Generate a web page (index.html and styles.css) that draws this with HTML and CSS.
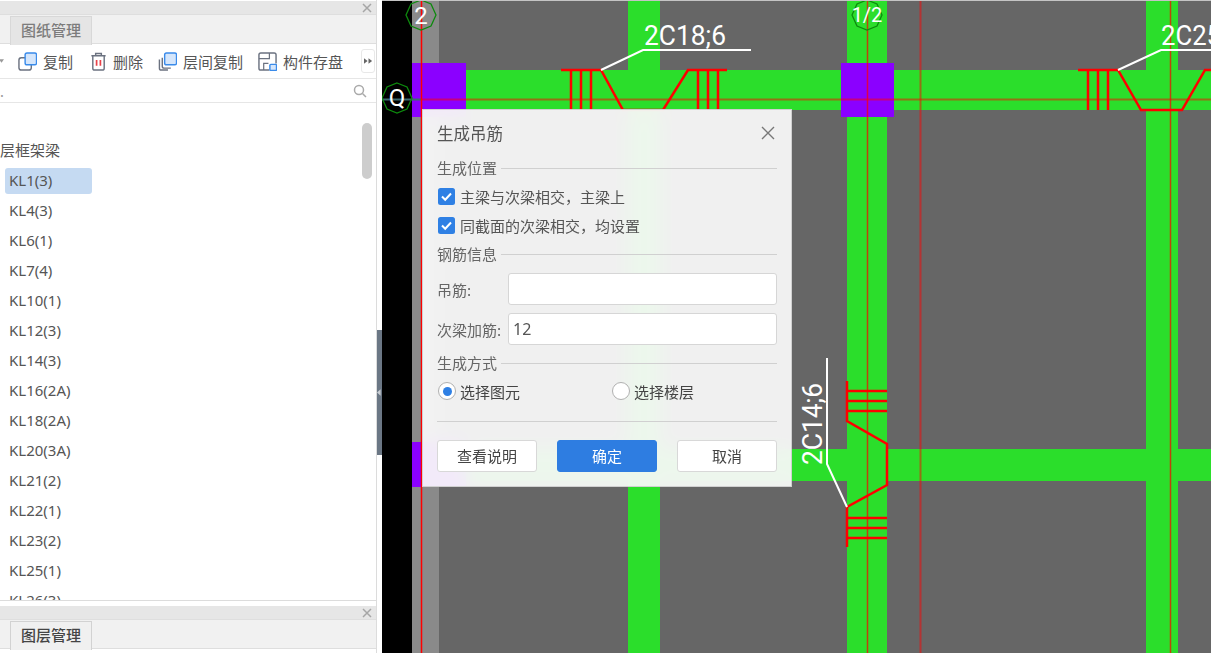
FILE: index.html
```html
<!DOCTYPE html>
<html lang="zh">
<head>
<meta charset="utf-8">
<title>生成吊筋</title>
<link rel="stylesheet" href="styles.css">
</head>
<body>
<div class="app">
  <aside class="side">
    <section class="panel panel-top">
      <div class="titlebar"><svg class="x" viewBox="0 0 10 10"><path d="M1 1l8 8M9 1l-8 8"/></svg></div>
      <div class="tabs"><div class="tab tab-muted">图纸管理</div></div>
      <div class="toolbar">
        <svg class="caret" viewBox="0 0 6 4"><path d="M0 0h6L3 4z"/></svg>
        <div class="tool tool-copy">
          <svg class="ico" viewBox="0 0 20 20"><rect x="1" y="6" width="13" height="13" rx="2.5" class="s-gray"/><rect x="7.5" y="1" width="12" height="12.5" rx="2" class="s-blue"/></svg>
          <span>复制</span>
        </div>
        <div class="tool tool-del">
          <svg class="ico ico-del" viewBox="0 0 17 20"><path d="M1 4h15M5.5 4V1.500h6V4M2.500 4v13a2 2 0 0 0 2 2h8a2 2 0 0 0 2-2V4" class="s-gray"/><path d="M6.500 8.500v6M10.500 8.500v6" class="s-red"/></svg>
          <span>删除</span>
        </div>
        <div class="tool tool-floor">
          <svg class="ico" viewBox="0 0 20 20"><path d="M1.500 8v9a2 2 0 0 0 2 2h7M4.500 6v9a2 2 0 0 0 2 2h7" class="s-gray"/><rect x="7" y="1" width="12.500" height="12.500" rx="2" class="s-blue"/></svg>
          <span>层间复制</span>
        </div>
        <div class="tool tool-save">
          <svg class="ico" viewBox="0 0 20 20"><path d="M12 19H3a2 2 0 0 1-2-2V3a2 2 0 0 1 2-2h14a2 2 0 0 1 2 2v9" class="s-gray"/><path d="M1 7h11V1M6 19v-7h5" class="s-line"/><rect x="12.500" y="13" width="7" height="6.500" rx="1" class="s-blue"/></svg>
          <span>构件存盘</span>
        </div>
        <div class="more"><svg viewBox="0 0 10 6"><path d="M0 0l4 3-4 3zM5 0l4 3-4 3z"/></svg></div>
      </div>
      <div class="search">
        <span class="placeholder">.</span>
        <svg class="search-ico" viewBox="0 0 14 14"><circle cx="6" cy="6" r="4.500"/><path d="M9.500 9.500L13 13"/></svg>
      </div>
      <div class="list">
        <div class="group">层框架梁</div>
        <div class="item item-on">KL1(3)</div>
        <div class="item">KL4(3)</div>
        <div class="item">KL6(1)</div>
        <div class="item">KL7(4)</div>
        <div class="item">KL10(1)</div>
        <div class="item">KL12(3)</div>
        <div class="item">KL14(3)</div>
        <div class="item">KL16(2A)</div>
        <div class="item">KL18(2A)</div>
        <div class="item">KL20(3A)</div>
        <div class="item">KL21(2)</div>
        <div class="item">KL22(1)</div>
        <div class="item">KL23(2)</div>
        <div class="item">KL25(1)</div>
        <div class="item">KL26(3)</div>
        <div class="thumb"></div>
      </div>
    </section>
    <section class="panel panel-bottom">
      <div class="titlebar"><svg class="x" viewBox="0 0 10 10"><path d="M1 1l8 8M9 1l-8 8"/></svg></div>
      <div class="tabs"><div class="tab">图层管理</div></div>
    </section>
  </aside>
  <div class="splitter"><div class="handle"><svg viewBox="0 0 5 8"><path d="M4.500 0v8L0 4z"/></svg></div></div>
  <main class="stage">
    <svg class="cad" viewBox="382 0 829 653" aria-label="CAD">
      <rect x="382" y="0" width="829" height="653" fill="#000"/>
      <rect x="412" y="0" width="27" height="653" fill="#8a8a8a"/>
      <rect x="439" y="0" width="772" height="653" fill="#666"/>
      <g fill="#2bde2b">
        <rect x="628" y="0" width="32" height="653"/>
        <rect x="847" y="0" width="40" height="653"/>
        <rect x="1146" y="0" width="32" height="653"/>
        <rect x="466" y="70" width="745" height="40"/>
        <rect x="412" y="449" width="799" height="32"/>
      </g>
      <g fill="#8b00ff">
        <rect x="412" y="63" width="54" height="54"/>
        <rect x="841" y="63" width="53" height="54"/>
        <rect x="412" y="442" width="54" height="45"/>
      </g>
      <path d="M382 99.500H421" stroke="#3d6a70" stroke-width="2" fill="none"/>
      <g stroke="#f00" fill="none">
        <path d="M421 99.500H1211" stroke-width="2" opacity=".5"/>
        <path d="M421.500 0V653" stroke-width="1.500"/>
        <path d="M867.500 0V653" stroke-width="1.500" opacity=".7"/>
        <path d="M920.500 0V653" stroke-width="2" opacity=".5"/>
        <path d="M1170.500 0V653" stroke-width="1.500" opacity=".7"/>
      </g>
      <g stroke="#f00" fill="none" stroke-width="2.500">
        <path d="M561 70H601L623 110H663L688 70H727"/>
        <path d="M571 70V110M581 70V110M591 70V110M698 70V110M708 70V110M718 70V110"/>
        <path d="M1078 70H1118L1141 110H1182L1205 70H1211"/>
        <path d="M1088 70V110M1098 70V110M1108 70V110"/>
        <path d="M847 381V421L887 444V485L847 507V547"/>
        <path d="M847 391H887M847 401H887M847 411H887M847 518H887M847 528H887M847 538H887"/>
      </g>
      <g stroke="#fff" fill="none" stroke-width="2">
        <path d="M601 70L643 50H751"/>
        <path d="M1118 70L1161 50H1211"/>
        <path d="M827 358V464L847 507"/>
      </g>
      <g class="cad-label">
        <text x="644" y="45" textLength="82" lengthAdjust="spacingAndGlyphs">2C18;6</text>
        <text x="1161" y="45" textLength="60" lengthAdjust="spacingAndGlyphs">2C25</text>
        <text transform="translate(822 465) rotate(-90)" textLength="82" lengthAdjust="spacingAndGlyphs">2C14;6</text>
      </g>
      <g fill="none" stroke="#0d8a0d" stroke-width="1.300">
        <polygon points="421,0 431,4 436,15 431,26 421,30 411,26 406,15 411,4"/>
        <polygon points="397,83 407,87 412,98 407,109 397,113 387,109 382,98 387,87"/>
        <polygon points="867,0 877,4 882,15 877,26 867,30 857,26 852,15 857,4"/>
      </g>
      <g class="cad-axis">
        <text x="421" y="24">2</text>
        <text x="397" y="106">Q</text>
        <text x="867" y="22" class="axis-small">1/2</text>
      </g>
      <rect x="382" y="0" width="829" height="1" fill="#c4c4c4"/>
    </svg>

    <div class="dialog">
      <header class="dlg-head">
        <h1>生成吊筋</h1>
        <svg class="dlg-x" viewBox="0 0 14 14"><path d="M1 1l12 12M13 1L1 13"/></svg>
      </header>
      <div class="legend legend-1"><span>生成位置</span></div>
      <div class="check check-1"><svg viewBox="0 0 17 17"><rect width="17" height="17" rx="2.500"/><path d="M4 8.500l3.200 3.300L13 5.500"/></svg><span>主梁与次梁相交，主梁上</span></div>
      <div class="check check-2"><svg viewBox="0 0 17 17"><rect width="17" height="17" rx="2.500"/><path d="M4 8.500l3.200 3.300L13 5.500"/></svg><span>同截面的次梁相交，均设置</span></div>
      <div class="legend legend-2"><span>钢筋信息</span></div>
      <div class="field field-1"><label>吊筋:</label><div class="input"></div></div>
      <div class="field field-2"><label>次梁加筋:</label><div class="input">12</div></div>
      <div class="legend legend-3"><span>生成方式</span></div>
      <div class="radios">
        <div class="radio radio-on"><i></i><span>选择图元</span></div>
        <div class="radio"><i></i><span>选择楼层</span></div>
      </div>
      <div class="rule"></div>
      <div class="buttons">
        <div class="btn">查看说明</div>
        <div class="btn btn-primary">确定</div>
        <div class="btn">取消</div>
      </div>
    </div>
  </main>
</div>
</body>
</html>
```
FILE: styles.css
```css
* { box-sizing: border-box; }
html, body { margin: 0; height: 100%; overflow: hidden; }
body { font-family: "Noto Sans CJK SC", "Noto Sans", sans-serif; color: #555; background: #fff; }
.app { display: flex; width: 1211px; height: 653px; filter: blur(.35px); }

/* left side */
.side { width: 377px; flex: none; display: flex; flex-direction: column; border-right: 1px solid #dcdcdc; background: #fff; }
.panel { display: flex; flex-direction: column; }
.panel-top { height: 601px; border-bottom: 1px solid #dcdcdc; }
.panel-bottom { flex: 1; margin-top: 5px; }
.titlebar { height: 14px; margin-top: 1px; flex: none; background: #e6e6e6; display: flex; justify-content: flex-end; align-items: center; padding-right: 4px; border-bottom: 1px solid #dedede; }
.panel-bottom .titlebar { margin-top: 0; }
.x { width: 10px; height: 10px; fill: none; stroke: #a6a6a6; stroke-width: 1.500; }
.tabs { height: 29px; flex: none; background: #f1f1f1; padding-left: 10px; border-bottom: 1px solid #dedede; display: flex; }
.tab { width: 82px; height: 29px; margin-top: 1px; border: 1px solid #d2d2d2; border-bottom: 0; background: #f0f0f0; font-size: 15px; font-weight: 500; line-height: 26px; text-align: center; color: #444; }
.tab-muted { background: #e5e5e5; color: #7c7c7c; border-color: #d8d8d8; }
.toolbar { height: 35px; flex: none; display: flex; align-items: center; border-bottom: 1px solid #e6e6e6; position: relative; font-size: 15px; color: #555; }
.caret { width: 5px; height: 4px; margin-left: -1px; fill: #999; flex: none; }
.tool { display: flex; align-items: center; gap: 6px; flex: none; }
.ico { width: 19px; height: 19px; flex: none; }
.ico-del { width: 17px; }
.tool-copy { margin-left: 14px; }
.tool-del { margin-left: 17px; }
.tool-floor { margin-left: 15px; }
.tool-save { margin-left: 15px; }
.s-gray { fill: #fff; stroke: #6b7280; stroke-width: 1.500; }
.s-line { fill: none; stroke: #6b7280; stroke-width: 1.300; }
.s-blue { fill: #d5e6fb; stroke: #3a8bea; stroke-width: 1.500; }
.s-red { fill: none; stroke: #e8424a; stroke-width: 1.800; }
.more { width: 14px; height: 24px; margin-left: 18px; border: 1px solid #e8e8e8; border-radius: 3px; display: flex; align-items: center; justify-content: center; flex: none; }
.more svg { width: 9px; height: 6px; fill: #666; }
.search { height: 24px; flex: none; display: flex; align-items: center; justify-content: space-between; padding: 0 9px 0 0; border-bottom: 1px solid #e6e6e6; font-size: 14px; color: #999; }
.search-ico { width: 14px; height: 14px; fill: none; stroke: #aaa; stroke-width: 1.500; }
.list { position: relative; flex: 1; min-height: 0; overflow: hidden; padding-top: 37px; font-size: 15px; color: #555; }
.group { height: 20px; line-height: 20px; margin-bottom: 8px; }
.item { width: 87px; height: 26px; margin: 0 0 4px 5px; padding-left: 4px; line-height: 25px; border-radius: 3px; font-family: "Noto Sans", sans-serif; font-size: 15px; }
.item-on { background: #c5daf2; }
.thumb { position: absolute; top: 20px; left: 362px; width: 10px; height: 56px; border-radius: 5px; background: #cdcdcd; }

/* splitter */
.splitter { width: 5px; flex: none; background: #fff; position: relative; }
.handle { position: absolute; left: 0; top: 330px; width: 5px; height: 125px; background: #6b7785; display: flex; align-items: center; }
.handle svg { width: 4px; height: 7px; fill: #c9ced4; }

/* cad canvas */
.stage { position: relative; flex: 1; min-width: 0; overflow: hidden; background: #000; }
.cad { display: block; width: 829px; height: 653px; }
.cad-label text { fill: #fff; font-family: "Roboto", sans-serif; font-weight: 400; font-size: 27px; }
.cad-axis text { fill: #fff; font-family: "Roboto", sans-serif; font-weight: 400; font-size: 24px; text-anchor: middle; }
.cad-axis .axis-small { font-size: 20px; }

/* dialog */
.dialog { position: absolute; left: 40px; top: 109px; width: 370px; height: 378px; background: rgba(249, 249, 249, .94); -webkit-backdrop-filter: blur(9px); backdrop-filter: blur(9px); border: 1px solid #d0d0d0; padding: 0 14px; font-size: 15px; color: #555; }
.dlg-head { height: 45px; display: flex; align-items: center; justify-content: space-between; padding-right: 2px; }
.dlg-head h1 { margin: 0; font-size: 16.500px; font-weight: 400; color: #555; }
.dlg-x { width: 14px; height: 14px; fill: none; stroke: #777; stroke-width: 1.400; }
.legend { display: flex; align-items: center; gap: 4px; height: 24px; color: #666; }
.legend::after { content: ""; flex: 1; height: 1px; margin-top: 2px; background: #d0d0d0; }
.check { display: flex; align-items: center; gap: 5px; height: 28px; padding-left: 1px; }
.check svg { width: 17px; height: 17px; flex: none; }
.check svg rect { fill: #2f80e4; }
.check svg path { fill: none; stroke: #fff; stroke-width: 2; }
.check-1 { margin-top: 3px; }
.check-2 { margin-top: 1px; }
.legend-2 { margin-top: 2px; }
.field { display: flex; align-items: center; height: 32px; }
.field label { width: 71px; flex: none; white-space: nowrap; color: #666; }
.field-1 { margin-top: 8px; }
.field-2 { margin-top: 8px; }
.input { flex: 1; height: 32px; background: #fff; border: 1px solid #d6d6d6; border-radius: 3px; padding-left: 4px; line-height: 30px; font-family: "Noto Sans", sans-serif; font-size: 16px; color: #555; }
.legend-3 { margin-top: 5px; }
.radios { display: flex; margin-top: 3px; height: 28px; }
.radio { display: flex; align-items: center; gap: 4px; flex: none; width: 174px; padding-left: 1px; color: #444; }
.radio i { width: 18px; height: 18px; border: 1.500px solid #b0b0b0; border-radius: 50%; background: #fff; flex: none; position: relative; }
.radio-on i::after { content: ""; position: absolute; inset: 3.500px; border-radius: 50%; background: #2f80e4; }
.rule { height: 1px; background: #d0d0d0; margin-top: 16px; }
.buttons { display: flex; justify-content: space-between; margin-top: 18px; }
.btn { width: 100px; height: 32px; border: 1px solid #d8d8d8; border-radius: 3px; background: #fff; text-align: center; line-height: 30px; color: #444; }
.btn-primary { background: #2e7de1; border-color: #2e7de1; color: #fff; }
```
